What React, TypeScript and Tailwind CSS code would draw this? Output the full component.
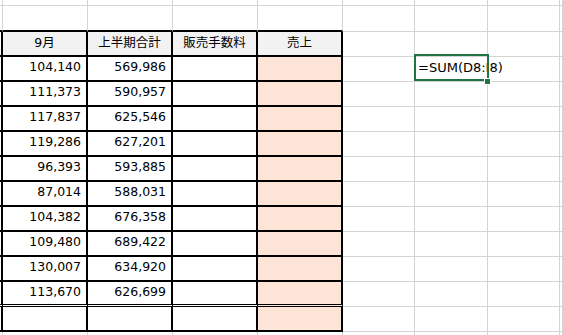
import React from 'react';

const rows: [string, string][] = [
  ['104,140', '569,986'],
  ['111,373', '590,957'],
  ['117,837', '625,546'],
  ['119,286', '627,201'],
  ['96,393', '593,885'],
  ['87,014', '588,031'],
  ['104,382', '676,358'],
  ['109,480', '689,422'],
  ['130,007', '634,920'],
  ['113,670', '626,699'],
];

// column widths, right border included
const widths = ['w-[3px]', 'w-[85px]', 'w-[85px]', 'w-[85px]', 'w-[85px]', 'w-[72px]', 'w-[73px]', 'w-[72px]', 'flex-1'];

type Kind = 'top' | 'above' | 'head' | 'data' | 'last' | 'total' | 'below';

function Cell({
  col,
  kind,
  children,
}: {
  col: number;
  kind: Kind;
  children?: React.ReactNode;
}) {
  const inTable = col <= 4;
  const tableRow = kind === 'head' || kind === 'data' || kind === 'last' || kind === 'total';

  let right = 'border-r border-r-[#d4d4d4]';
  if (inTable && tableRow) right = 'border-r-2 border-r-black';

  let bottom = 'border-b border-b-[#d4d4d4]';
  if (inTable) {
    if (kind === 'above' || kind === 'head' || kind === 'data' || kind === 'total')
      bottom = 'border-b-2 border-b-black';
    if (kind === 'last') bottom = 'border-b-[3px] border-double border-b-black';
  }
  if (kind === 'below') bottom = '';

  let bg = '';
  if (tableRow && col >= 1 && col <= 4) {
    if (kind === 'head') bg = 'bg-[#f2f2f2]';
    else if (col === 4) bg = 'bg-[#fce4d6]';
  }

  return (
    <div className={`relative box-border h-full shrink-0 ${widths[col]} ${right} ${bottom} ${bg}`}>
      {children}
    </div>
  );
}

function Row({
  kind,
  height,
  cells = {},
}: {
  kind: Kind;
  height: string;
  cells?: Record<number, React.ReactNode>;
}) {
  return (
    <div className={`flex ${height}`}>
      {widths.map((_, i) => (
        <Cell key={i} col={i} kind={kind}>
          {cells[i]}
        </Cell>
      ))}
    </div>
  );
}

const num = (v: string) => (
  <div className="flex h-full items-center justify-end pb-[2px] pr-[5px]">{v}</div>
);
const head = (v: string) => (
  <div className="flex h-full items-center justify-center pb-[1px]">{v}</div>
);

export default function App() {
  return (
    <div
      className="h-[335px] w-[563px] overflow-hidden bg-white text-[12.5px] text-black"
      style={{ fontFamily: '"DejaVu Sans", "Noto Sans CJK JP", sans-serif' }}
    >
      <Row kind="top" height="h-[6px]" />
      <Row kind="above" height="h-[26px]" />
      <Row
        kind="head"
        height="h-[25px]"
        cells={{ 1: head('9月'), 2: head('上半期合計'), 3: head('販売手数料'), 4: head('売上') }}
      />
      {rows.map(([a, b], i) => (
        <Row
          key={i}
          kind={i === rows.length - 1 ? 'last' : 'data'}
          height="h-[25px]"
          cells={{
            1: num(a),
            2: num(b),
            ...(i === 0
              ? {
                  6: (
                    <>
                      <div className="flex h-full items-center whitespace-nowrap pb-[2px] pl-[3px] text-[13px]">
                        =SUM(D8:I8)
                      </div>
                      <div className="pointer-events-none absolute -left-[1px] -top-[3px] z-10 h-[27px] w-[75px] border-2 border-[#217346]" />
                      <div className="absolute -right-[4px] bottom-[-4px] z-20 h-[7px] w-[7px] border border-white bg-[#217346]" />
                    </>
                  ),
                }
              : {}),
          }}
        />
      ))}
      <Row kind="total" height="h-[25px]" />
      <Row kind="below" height="h-[10px]" />
    </div>
  );
}
